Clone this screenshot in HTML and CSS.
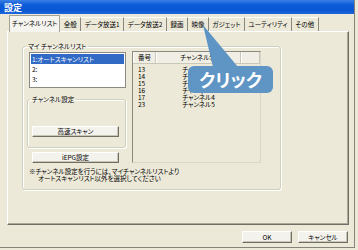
FILE: index.html
```html
<!DOCTYPE html>
<html lang="ja">
<head>
    <meta charset="UTF-8">
    <title>設定</title>
    <link rel="stylesheet" href="styles.css">
</head>
<body>
    <div class="window">
        <div class="titlebar">設定</div>

        <div class="tabs">
            <div class="tab active">チャンネルリスト</div>
            <div class="tab">全般</div>
            <div class="tab">データ放送1</div>
            <div class="tab">データ放送2</div>
            <div class="tab">録画</div>
            <div class="tab">映像</div>
            <div class="tab">ガジェット</div>
            <div class="tab">ユーティリティ</div>
            <div class="tab">その他</div>
        </div>

        <div class="panel">
            <fieldset class="group mylist">
                <legend>マイ チャンネルリスト</legend>
                <div class="group-row">
                    <div class="left-col">
                        <ul class="listbox">
                            <li class="selected">1:オートスキャンリスト</li>
                            <li>2:</li>
                            <li>3:</li>
                        </ul>
                        <fieldset class="group ch-group">
                            <legend>チャンネル設定</legend>
                            <button class="btn wide">高速スキャン</button>
                        </fieldset>
                        <button class="btn wide epg">iEPG設定</button>
                    </div>

                    <div class="listview">
                        <div class="lv-head">
                            <div class="col-num">番号</div>
                            <div class="col-name">チャンネル名</div>
                            <div class="col-rest"></div>
                        </div>
                        <div class="lv-body">
                            <div class="lv-row"><span class="col-num">13</span><span class="col-name">チャンネル0</span></div>
                            <div class="lv-row"><span class="col-num">14</span><span class="col-name">チャンネル1</span></div>
                            <div class="lv-row"><span class="col-num">15</span><span class="col-name">チャンネル2</span></div>
                            <div class="lv-row"><span class="col-num">16</span><span class="col-name">チャンネル3</span></div>
                            <div class="lv-row"><span class="col-num">17</span><span class="col-name">チャンネル4</span></div>
                            <div class="lv-row"><span class="col-num">23</span><span class="col-name">チャンネル5</span></div>
                        </div>
                    </div>
                </div>
                <p class="note">※チャンネル設定を行うには、マイチャンネルリストより<br><span class="indent">オートスキャンリスト以外を選択してください</span></p>
            </fieldset>
        </div>

        <div class="footer">
            <button class="btn">OK</button>
            <button class="btn">キャンセル</button>
        </div>

        <!-- callout pointing at the 映像 tab -->
        <svg class="arrow" width="40" height="46" viewBox="0 0 40 46">
            <polygon points="3,3 38,45 13,45" fill="#5e95c5"/>
        </svg>
        <div class="callout">クリック</div>
    </div>
</body>
</html>
```

FILE: styles.css
```css
* {
    box-sizing: border-box;
}

body {
    margin: 0;
    background: #ece9d8;
    font-family: "Noto Sans CJK JP", "Noto Sans", sans-serif;
    font-size: 6.5px;
    font-feature-settings: "palt";
    color: #000;
}

.window {
    position: relative;
    width: 355px;
    height: 248px;
    background: #ece9d8;
    border-right: 1px solid #85837a;
    border-bottom: 1px solid #85837a;
}

.titlebar {
    height: 14px;
    padding: 1px 0 0 4px;
    background: linear-gradient(#3a7fe6, #0c5bd8 35%, #0a57d2 75%, #1f68dc);
    color: #fff;
    font-size: 9px;
    font-weight: bold;
    line-height: 13px;
}

/* tab strip */
.tabs {
    display: flex;
    align-items: flex-end;
    height: 17px;
    padding: 1px 0 0 9px;
}

.tab {
    height: 14px;
    padding: 0 3.5px;
    line-height: 13px;
    white-space: nowrap;
    border-top: 1px solid #fff;
    border-right: 1px solid #8a887c;
}

.tab.active {
    position: relative;
    z-index: 1;
    height: 17px;
    margin-bottom: -1px;
    padding: 0 2px;
    line-height: 15px;
    background: #f5f4ee;
    border: 1px solid #a5a396;
    border-bottom: none;
}

.panel {
    width: 342px;
    height: 194px;
    margin-left: 7px;
    padding: 10px 0 0 14px;
    border: 1px solid;
    border-color: #fff #716f64 #716f64 #fff;
    box-shadow: inset -1px -1px 0 #aca899;
}

/* group boxes */
.group {
    margin: 0;
    border: 1px solid #d0d0bf;
    border-radius: 3px;
    box-shadow: 1px 1px 0 #fff, inset 1px 1px 0 #fff;
}

.group legend {
    padding: 0 2px;
    line-height: 8px;
}

.mylist {
    width: 259px;
    height: 148px;
    padding: 2px 6px 6px 6px;
}

.mylist > legend {
    margin-left: -3px;
}

.group-row {
    display: flex;
    gap: 6px;
}

.left-col {
    display: flex;
    flex-direction: column;
    width: 97px;
}

.listbox {
    height: 36px;
    margin: 0;
    padding: 1px;
    list-style: none;
    background: #fff;
    border: 1px solid #8b8a80;
}

.listbox li {
    padding-left: 1px;
    line-height: 10px;
}

.listbox li.selected {
    background: #316ac5;
    color: #fff;
}

.ch-group {
    width: 99px;
    height: 53px;
    margin: 7px 0 0 -2px;
    padding: 23px 4px 0 4px;
}

.ch-group legend {
    margin-left: -2px;
}

.btn {
    width: 50px;
    height: 12px;
    padding: 0;
    font-family: inherit;
    font-size: 6.5px;
    font-feature-settings: "palt";
    line-height: 10px;
    color: #000;
    background: #f3f2ec;
    border: 1px solid;
    border-color: #fff #716f64 #716f64 #fff;
    box-shadow: inset -1px -1px 0 #c8c5b6;
}

.btn.wide {
    width: 87px;
    height: 11px;
    line-height: 9px;
}

.btn.epg {
    margin: 4px 0 0 3px;
}

/* channel list view */
.listview {
    width: 129px;
    height: 112px;
    margin-top: -1px;
    border: 1px solid;
    border-color: #8b8a80 #d8d6c8 #d8d6c8 #8b8a80;
}

.lv-head {
    display: flex;
    height: 12px;
    line-height: 11px;
    background: #f1efe5;
    border-bottom: 1px solid #c9c7b8;
}

.lv-head > div {
    border-right: 1px solid #c9c7b8;
    box-shadow: inset 1px 0 0 #fff;
}

.col-num {
    width: 23px;
    padding-left: 5px;
}

.col-name {
    width: 85px;
    text-align: center;
}

.col-rest {
    flex: 1;
}

.lv-body {
    padding-top: 2px;
}

.lv-row {
    display: flex;
    line-height: 7px;
}

.note {
    margin: 5px 0 0 0;
    line-height: 7px;
    white-space: nowrap;
}

.note .indent {
    padding-left: 9px;
}

.footer {
    display: flex;
    justify-content: flex-end;
    gap: 6px;
    padding: 6px 6px 0 0;
}

.callout {
    position: absolute;
    left: 188px;
    top: 66px;
    width: 85px;
    height: 27px;
    background: #5e95c5;
    border-radius: 6px;
    color: #fff;
    font-size: 18px;
    font-weight: bold;
    line-height: 27px;
    text-align: center;
}

.arrow {
    position: absolute;
    left: 200px;
    top: 22px;
}
```
